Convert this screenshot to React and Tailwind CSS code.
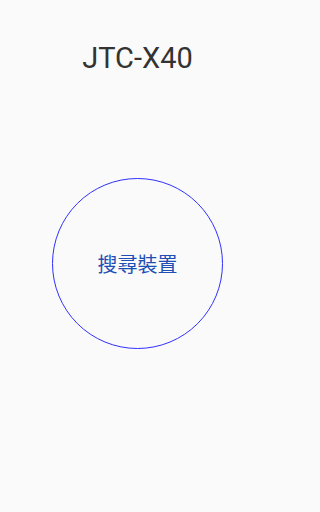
export default function App() {
  return (
    <div className="min-h-screen w-full bg-[#fafafa]">
      <div className="w-[275px] flex flex-col items-center font-['Roboto','Noto_Sans_CJK_TC',sans-serif]">
        <h1 className="mt-[40px] text-[29px] leading-[36px] text-[#333333]">JTC-X40</h1>
        <button className="mt-[102px] w-[171px] h-[171px] rounded-full border border-[#3030ff] flex items-center justify-center text-[20px] text-[#1f4fb5] font-['Noto_Sans_CJK_TC',sans-serif]">
          搜尋裝置
        </button>
      </div>
    </div>
  );
}
